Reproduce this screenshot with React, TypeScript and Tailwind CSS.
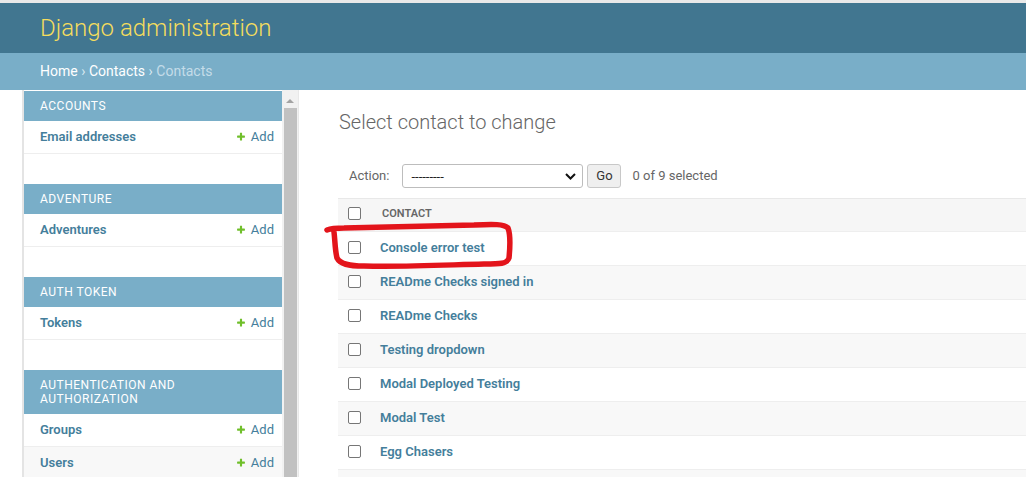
import React from 'react';

// Django admin changelist: sidebar nav + "Select contact to change"

interface AppModule {
  name: string;
  models: string[];
}

const APPS: AppModule[] = [
  { name: 'Accounts', models: ['Email addresses'] },
  { name: 'Adventure', models: ['Adventures'] },
  { name: 'Auth Token', models: ['Tokens'] },
  { name: 'Authentication and Authorization', models: ['Groups', 'Users'] },
];

const CONTACTS = [
  'Console error test',
  'READme Checks signed in',
  'READme Checks',
  'Testing dropdown',
  'Modal Deployed Testing',
  'Modal Test',
  'Egg Chasers',
  '',
];

const AddIcon: React.FC = () => (
  <svg width="10" height="10" viewBox="0 0 1792 1792" className="shrink-0">
    <path
      fill="#70bf2b"
      d="M1600 736v192q0 40-28 68t-68 28h-416v416q0 40-28 68t-68 28h-192q-40 0-68-28t-28-68v-416h-416q-40 0-68-28t-28-68v-192q0-40 28-68t68-28h416v-416q0-40 28-68t68-28h192q40 0 68 28t28 68v416h416q40 0 68 28t28 68z"
    />
  </svg>
);

const Checkbox: React.FC = () => (
  <span className="-mt-px block h-[13px] w-[13px] shrink-0 rounded-[2px] border border-[#767676] bg-white" />
);

const Sidebar: React.FC = () => (
  <div className="flex shrink-0">
    {/* collapsed toggle strip */}
    <div className="w-[23px] border-r border-[#e4e4e4]" />
    <div className="w-[259px] border-l border-[#e4e4e4] pt-px">
      {APPS.map((app) => (
        <div key={app.name} className="mb-[30px]">
          <div className="bg-[#79aec8] px-4 py-2 text-[12px] leading-[14px] tracking-[0.5px] text-white uppercase">
            {app.name}
          </div>
          {app.models.map((model) => (
            <div
              key={model}
              className={`flex h-[33px] items-center justify-between border-b border-[#eeeeee] pr-2 pl-4 text-[13px] ${
                model === 'Users' ? 'bg-[#f8f8f8]' : 'bg-white'
              }`}
            >
              <span className="font-semibold text-[#447e9b]">{model}</span>
              <span className="flex items-center gap-[5px] text-[#447e9b]">
                <AddIcon />
                Add
              </span>
            </div>
          ))}
        </div>
      ))}
    </div>
    {/* sidebar scrollbar */}
    <div className="flex w-[17px] flex-col items-center border-r border-[#e8e8e8] bg-[#f1f1f1] pt-[9px]">
      <span className="h-0 w-0 border-x-[4px] border-b-[4px] border-x-transparent border-b-[#a3a3a3]" />
      <span className="mt-[5px] h-[400px] w-[13px] bg-[#c1c1c1]" />
    </div>
  </div>
);

const ChangeList: React.FC = () => (
  <main className="min-w-0 flex-1 pt-5 pl-10">
    <h1 className="mb-5 text-[20px] leading-6 font-light text-[#666]">Select contact to change</h1>

    {/* Actions */}
    <div className="flex items-center p-[10px] text-[13px] text-[#666]">
      <span>Action:</span>
      <div className="ml-[13px] flex h-6 w-[181px] items-center justify-between rounded-[3px] border border-[#bdbdbd] bg-white pr-[6px] pl-[8px] text-[#222]">
        <span className="leading-none">---------</span>
        <svg width="11" height="7" viewBox="0 0 11 7">
          <polyline points="1,1 5.5,5.5 10,1" fill="none" stroke="#111" strokeWidth="2" />
        </svg>
      </div>
      <button className="ml-1 h-6 w-[34px] rounded-[3px] border border-[#c8c8c8] bg-[#efefef] text-[13px] text-[#333]">
        Go
      </button>
      <span className="ml-[11px]">0 of 9 selected</span>
    </div>

    {/* Results */}
    <div className="-ml-px border-t border-[#e8e8e8]">
      <div className="flex h-[33px] items-center border-b border-[#eeeeee] bg-[#f6f6f6] pb-[2px] pl-[10px]">
        <Checkbox />
        <span className="ml-[21px] text-[11px] font-semibold text-[#666] uppercase">Contact</span>
      </div>
      {CONTACTS.map((name, i) => (
        <div
          key={i}
          className={`flex h-[34px] items-center border-b border-[#eeeeee] pb-[2px] pl-[10px] ${
            i % 2 === 0 ? 'bg-white' : 'bg-[#f8f8f8]'
          }`}
        >
          <Checkbox />
          {name && <span className="ml-[19px] text-[13px] font-semibold text-[#447e9b]">{name}</span>}
        </div>
      ))}
    </div>
  </main>
);

export default function App() {
  return (
    <div className="relative h-[477px] w-full overflow-hidden bg-white font-[Roboto,'Liberation_Sans',sans-serif]">
      <div className="h-[3px] bg-[#e9e9e9]" />
      <header className="flex h-[50px] items-center bg-[#417690] px-10">
        <span className="text-[24px] font-light text-[#f5dd5d]">Django administration</span>
      </header>
      <nav className="flex h-[37px] items-center bg-[#79aec8] px-10 text-[14px] text-white">
        <span>Home</span>
        <span className="mx-[3.5px] text-[#d8e9f1]">›</span>
        <span>Contacts</span>
        <span className="mx-[3.5px] text-[#d8e9f1]">›</span>
        <span className="text-[#c4dce8]">Contacts</span>
      </nav>
      <div className="flex">
        <Sidebar />
        <ChangeList />
      </div>

      {/* red hand-drawn annotation over the first row */}
      <svg
        className="pointer-events-none absolute top-[218px] left-[324px]"
        width="195"
        height="56"
        viewBox="0 0 195 56"
      >
        <path
          d="M3 12 C 8 10, 14 10, 20 10 C 60 9, 110 8, 150 7 C 170 6, 180 6, 184 10 C 187 18, 186 30, 185 40 C 183 46, 176 46, 160 46 C 120 47, 80 49, 40 48 C 24 48, 16 46, 13 40 C 11 32, 11 22, 10 14"
          fill="none"
          stroke="#e3141b"
          strokeWidth="5.5"
          strokeLinecap="round"
          strokeLinejoin="round"
        />
      </svg>
    </div>
  );
}
